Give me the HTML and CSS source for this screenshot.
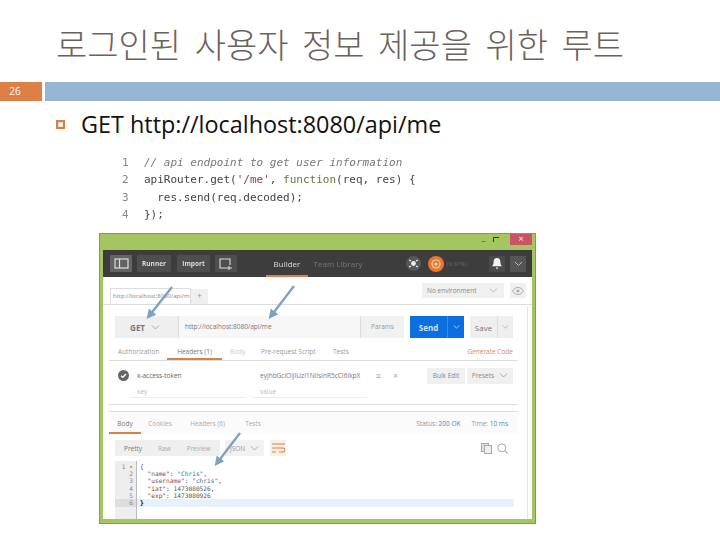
FILE: index.html
```html
<!DOCTYPE html>
<html lang="ko">
<head>
<meta charset="utf-8">
<title>로그인된 사용자 정보 제공을 위한 루트</title>
<link rel="stylesheet" href="styles.css">
</head>
<body>
<div class="slide">
  <h1 class="title">로그인된 사용자 정보 제공을 위한 루트</h1>
  <div class="band"><div class="num">26</div><div class="bar"></div></div>
  <div class="bullet"><span class="mark"></span><span class="bullet-text">GET http://localhost:8080/api/me</span></div>

  <div class="snippet">
    <div class="ln"><span class="no">1</span><span class="cm">// api endpoint to get user information</span></div>
    <div class="ln"><span class="no">2</span><span>apiRouter.get(<span class="str">'/me'</span>, <span class="kw">function</span>(req, res) {</span></div>
    <div class="ln"><span class="no">3</span><span>  res.send(req.decoded);</span></div>
    <div class="ln"><span class="no">4</span><span>});</span></div>
  </div>

  <div class="window">
    <div class="titlebar">
      <span class="wc">–</span><span class="wc max"></span><span class="close">×</span>
    </div>
    <div class="header">
      <span class="hbtn side"><svg width="15" height="11" viewBox="0 0 15 11"><rect x="1" y="1" width="13" height="9" fill="none" stroke="#ddd" stroke-width="1.2"/><path d="M5.5 1v9" stroke="#ddd" stroke-width="1.2"/></svg></span>
      <span class="hbtn">Runner</span>
      <span class="hbtn imp">Import</span>
      <span class="hbtn newb"><svg width="14" height="12" viewBox="0 0 14 12"><path d="M9 10H1V1h10v6M10 8v4M8 10h5" fill="none" stroke="#ddd" stroke-width="1.1"/></svg></span>
      <span class="htab active">Builder</span>
      <span class="htab">Team Library</span>
      <span class="sync"><svg width="15" height="15" viewBox="0 0 15 15"><circle cx="7.5" cy="7.5" r="7.5" fill="#585858"/><circle cx="7.5" cy="7.5" r="2.4" fill="#eee"/><path d="M3 4l2 1M12 4l-2 1M3 11l2-1M12 11l-2-1" stroke="#eee" stroke-width="1.2"/></svg></span>
      <span class="avatar"><svg width="16" height="16" viewBox="0 0 16 16"><circle cx="8" cy="8" r="8" fill="#e8772e"/><circle cx="8" cy="8" r="4" fill="none" stroke="#f6d2b8" stroke-width="1.2"/><circle cx="8" cy="8" r="1.6" fill="#f6d2b8"/></svg></span>
      <span class="user">IN SYNC</span>
      <span class="hsq bell"><svg width="10" height="12" viewBox="0 0 10 12"><path d="M5 0c2.600 0 3.400 2 3.400 4.200 0 2 .8 3.200 1.600 4H0c.8-.8 1.600-2 1.600-4C1.600 2 2.400 0 5 0zM3.800 9.500h2.400L5 11.500z" fill="#f2f2f2"/></svg></span>
      <span class="hsq chev"><svg width="9" height="6" viewBox="0 0 9 6"><path d="M1 1l3.500 3.500L8 1" fill="none" stroke="#bbb" stroke-width="1"/></svg></span>
    </div>
    <div class="app">
      <div class="tabrow">
        <span class="reqtab">http://localhost:8080/api/m</span>
        <span class="plus">+</span>
        <span class="env">No environment<svg class="v" width="9" height="5" viewBox="0 0 9 5"><path d="M1 .5l3.500 3.500L8 .5" fill="none" stroke="#bbb"/></svg></span>
        <span class="eye"><svg width="12" height="8" viewBox="0 0 12 8"><path d="M.5 4C2 1.500 4 .5 6 .5S10 1.500 11.500 4C10 6.500 8 7.500 6 7.500S2 6.500 .5 4z" fill="none" stroke="#aaa"/><circle cx="6" cy="4" r="1.600" fill="#aaa"/></svg></span>
      </div>
      <div class="urlrow">
        <span class="method">GET<svg class="v" width="9" height="5" viewBox="0 0 9 5"><path d="M1 .5l3.500 3.500L8 .5" fill="none" stroke="#aaa"/></svg></span>
        <span class="url">http://localhost:8080/api/me</span>
        <span class="params">Params</span>
        <span class="send"><b>Send</b><span class="send-v"><svg width="7" height="4" viewBox="0 0 9 5"><path d="M1 .5l3.500 3.500L8 .5" fill="none" stroke="#cfe3fa"/></svg></span></span>
        <span class="save"><span class="save-l">Save</span><span class="save-v"><svg width="7" height="4" viewBox="0 0 9 5"><path d="M1 .5l3.500 3.500L8 .5" fill="none" stroke="#aaa"/></svg></span></span>
      </div>
      <div class="reqtabs">
        <span class="rt t1">Authorization</span>
        <span class="rt on t2">Headers <i>(1)</i></span>
        <span class="rt dim t3">Body</span>
        <span class="rt t4">Pre-request Script</span>
        <span class="rt t5">Tests</span>
        <span class="gen">Generate Code</span>
      </div>
      <div class="hdrrow">
        <span class="check"><svg width="11" height="11" viewBox="0 0 11 11"><circle cx="5.500" cy="5.500" r="5.500" fill="#666"/><path d="M3 5.700l1.800 1.600L8 4" fill="none" stroke="#fff" stroke-width="1.300"/></svg></span>
        <span class="hk">x-access-token</span>
        <span class="hv">eyJhbGciOiJIUzI1NiIsInR5cCI6IkpX</span>
        <span class="hico">≡</span><span class="hico x">×</span>
        <span class="grey bulk">Bulk Edit</span>
        <span class="grey presets">Presets<svg class="v" width="9" height="5" viewBox="0 0 9 5"><path d="M1 .5l3.500 3.500L8 .5" fill="none" stroke="#aaa"/></svg></span>
      </div>
      <div class="keyrow"><span class="kk">key</span><span class="kv">value</span></div>
      <div class="resptabs">
        <span class="rp on">Body</span>
        <span class="rp c1">Cookies</span>
        <span class="rp c2">Headers <i>(6)</i></span>
        <span class="rp c3">Tests</span>
        <span class="status">Status: <i>200 OK</i></span>
        <span class="status time">Time: <i>10 ms</i></span>
      </div>
      <div class="viewrow">
        <span class="seg"><span class="sel">Pretty</span><span>Raw</span><span>Preview</span></span>
        <span class="json">JSON<svg class="v" width="9" height="5" viewBox="0 0 9 5"><path d="M1 .5l3.500 3.500L8 .5" fill="none" stroke="#aaa"/></svg></span>
        <span class="wrap"><svg width="13" height="11" viewBox="0 0 13 11"><path d="M0 1h13M0 5h11a2 2 0 0 1 0 4H7M0 9h4" fill="none" stroke="#dd8047" stroke-width="1.100"/></svg></span>
        <span class="tools"><svg width="11" height="11" viewBox="0 0 11 11"><rect x=".5" y=".5" width="7" height="8" fill="#ddd" stroke="#aaa"/><rect x="3.500" y="2.500" width="7" height="8" fill="#eee" stroke="#aaa"/></svg><svg width="11" height="11" viewBox="0 0 11 11"><circle cx="4.800" cy="4.800" r="4" fill="none" stroke="#aaa"/><path d="M7.700 7.700L10.500 10.500" stroke="#aaa" stroke-width="1.200"/></svg></span>
      </div>
      <div class="editor">
        <div class="gutter"><span>1 ▾</span><span>2</span><span>3</span><span>4</span><span>5</span><span class="cur">6</span></div>
        <div class="src">
          <span>{</span>
          <span>  <em>"name"</em>: <u>"Chris"</u>,</span>
          <span>  <em>"username"</em>: <u>"chris"</u>,</span>
          <span>  <em>"iat"</em>: <s>1473080526</s>,</span>
          <span>  <em>"exp"</em>: <s>1473080926</s></span>
          <span class="cur">}</span>
        </div>
      </div>
    </div>
  </div>

  <svg class="arrows" width="720" height="540" viewBox="0 0 720 540">
    <defs><marker id="head" markerWidth="4" markerHeight="4" refX="2.400" refY="2" orient="auto"><path d="M0 0L4 2L0 4z" fill="#7ea3c2"/></marker></defs>
    <path d="M172 287L149 316" stroke="#7ea3c2" stroke-width="2.400" marker-end="url(#head)"/>
    <path d="M294 286L271 316" stroke="#7ea3c2" stroke-width="2.400" marker-end="url(#head)"/>
    <path d="M240 433L217 463" stroke="#7ea3c2" stroke-width="2.400" marker-end="url(#head)"/>
  </svg>
</div>
</body>
</html>
```
FILE: styles.css
```css
* { box-sizing: border-box; }
html, body { margin: 0; padding: 0; background: #fff; }
.slide { position: relative; width: 720px; height: 540px; overflow: hidden; font-family: "Open Sans", "Noto Sans", sans-serif; }

.title { margin: 0; height: 82px; padding: 22px 0 0 56px; font: 300 34px/44px "Noto Sans CJK KR", sans-serif; color: #6c625c; word-spacing: 4px; white-space: nowrap; }

.band { display: flex; gap: 3px; height: 19px; }
.num { width: 42px; background: #dd8047; color: #fff; font-size: 10px; line-height: 19px; text-align: center; padding-right: 12px; }
.bar { flex: 1; background: #94b6d2; }

.bullet { display: flex; align-items: center; height: 46px; padding-left: 56px; }
.mark { width: 9px; height: 9px; border: 2px solid #dd8047; box-shadow: inset 0 0 0 1px #f3d9c8; margin-right: 16px; }
.bullet-text { font-size: 23.400px; color: #111; white-space: nowrap; }

.snippet { padding: 7px 0 0 122px; font: 11px/17.300px "DejaVu Sans Mono", monospace; color: #444; filter: blur(.3px); }
.ln { display: flex; white-space: pre; }
.no { width: 22px; color: #888; }
.cm { color: #777; font-style: italic; }
.str { color: #a33; }
.kw { color: #5a7a3a; }

.window { position: absolute; left: 99px; top: 233px; width: 437px; height: 291px; background: #a5c561; border: 1px solid #7f9e45; padding: 0 3px 4px; display: flex; flex-direction: column; font-size: 6.500px; color: #999; filter: blur(.4px); }

.titlebar { height: 16px; display: flex; justify-content: flex-end; align-items: flex-start; flex: none; }
.wc { width: 13px; height: 11px; color: #333; font-size: 8px; line-height: 12px; text-align: center; }
.wc.max { position: relative; margin-right: 7px; }
.wc.max::before { content: ""; position: absolute; left: 3px; top: 3px; width: 5px; height: 4px; border: 1px solid #333; border-width: 1px 0 0 1px; }
.close { width: 22px; height: 11px; background: #c95463; color: #fff; font-size: 9px; line-height: 10px; text-align: center; }

.header { height: 27px; flex: none; background: #3d3d3d; display: flex; align-items: center; padding-left: 7px; color: #ddd; font-weight: 700; }
.hbtn { height: 17px; background: #4e4e4e; display: flex; align-items: center; justify-content: center; width: 34px; margin-right: 6px; border-radius: 1px; }
.hbtn.side { width: 22px; background: #646464; margin-right: 5px; }
.hbtn.imp { width: 33px; margin-right: 5px; }
.hbtn.newb { width: 22px; }
.htab { height: 27px; display: flex; align-items: center; justify-content: center; font-size: 8px; font-weight: 400; color: #777; width: 56px; }
.htab.active { width: 42px; margin-left: 23px; margin-right: 2px; color: #ddd; border-bottom: 2px solid #dd8047; padding-top: 2px; }
.sync { margin-left: 40px; display: flex; }
.avatar { margin-left: 7px; display: flex; }
.user { color: #666; font-size: 5.500px; font-weight: 400; width: 45px; padding-left: 3px; }
.hsq { width: 16px; height: 16px; background: #555; display: flex; align-items: center; justify-content: center; }
.bell { margin-right: 5px; background: #4a4a4a; }

.app { flex: 1; background: #fff; display: flex; flex-direction: column; min-height: 0; position: relative; }
.app::after { content: ""; position: absolute; right: 4px; top: 30px; bottom: 0; width: 1px; background: #e4e4e4; }

.tabrow { height: 28px; flex: none; display: flex; align-items: flex-end; padding-left: 7px; border-bottom: 1px solid #ddd; }
.reqtab { width: 81px; height: 16px; border: 1px solid #ddd; border-bottom: 0; background: #fff; font-size: 6px; line-height: 15px; padding-left: 2px; color: #888; white-space: nowrap; }
.plus { width: 17px; height: 15px; background: #f0f0f0; text-align: center; line-height: 14px; font-size: 9px; }
.env { margin-left: 214px; margin-bottom: 6px; width: 82px; height: 15px; background: #f0f0f0; display: flex; align-items: center; justify-content: space-between; padding: 0 6px 0 5px; color: #888; }
.eye { margin-left: 6px; margin-bottom: 6px; width: 16px; height: 15px; background: #f0f0f0; display: flex; align-items: center; justify-content: center; }

.urlrow { height: 22px; margin-top: 11px; flex: none; display: flex; padding-left: 12px; }
.method { width: 63px; background: #efefef; font-weight: 700; color: #777; font-size: 8px; display: flex; align-items: center; justify-content: flex-end; gap: 6px; padding-right: 18px; }
.url { width: 182px; background: #f7f7f7; border-left: 1px solid #ddd; line-height: 22px; padding-left: 6px; color: #777; }
.params { width: 44px; background: #f1f1f1; border-left: 1px solid #ddd; text-align: center; line-height: 22px; }
.send { width: 54px; margin-left: 6px; background: #0b6fe0; color: #cfe3fa; font-size: 8px; display: flex; align-items: center; }
.send b { flex: 1; text-align: center; }
.send-v { width: 17px; height: 22px; border-left: 1px solid #3c8ce6; display: flex; align-items: center; justify-content: center; }
.save { width: 43px; margin-left: 6px; background: #efefef; display: flex; align-items: center; color: #777; font-size: 8px; }
.save-l { flex: 1; text-align: center; }
.save-v { width: 16px; height: 22px; border-left: 1px solid #ddd; display: flex; align-items: center; justify-content: center; }

.reqtabs { height: 23px; flex: none; display: flex; align-items: center; border-bottom: 1px solid #ddd; margin: 0 14px 0 6px; }
.rt { white-space: nowrap; padding-top: 5px; }
.rt i { font-style: normal; color: #4a8ac0; }
.t1 { margin-left: 9px; width: 49px; }
.t2 { width: 55px; height: 22px; line-height: 18px; text-align: center; color: #777; border-bottom: 2px solid #dd8047; }
.t3 { margin-left: 8px; width: 31px; color: #ccc; }
.t4 { width: 72px; }
.gen { margin-left: auto; color: #d78a5b; padding-top: 5px; margin-right: 5px; }

.hdrrow { height: 23px; margin-top: 3px; flex: none; display: flex; align-items: center; padding-left: 15px; }
.check { display: flex; margin-right: 8px; }
.hk { width: 123px; color: #666; }
.hv { width: 110px; color: #777; white-space: nowrap; }
.hico { width: 17px; text-align: center; color: #aaa; font-size: 9px; }
.hico.x { margin-right: 23px; }
.grey { height: 16px; background: #f0f0f0; display: flex; align-items: center; justify-content: center; color: #888; }
.bulk { width: 38px; margin-right: 2px; }
.presets { width: 46px; gap: 5px; }

.keyrow { height: 18px; flex: none; display: flex; border-bottom: 1px solid #ddd; margin: 0 14px 0 6px; color: #bbb; }
.kk { margin-left: 21px; width: 116px; height: 11px; border-bottom: 1px solid #eee; line-height: 10px; padding-left: 7px; }
.kv { margin-left: 6px; width: 115px; height: 11px; border-bottom: 1px solid #eee; line-height: 10px; padding-left: 8px; }

.resptabs { height: 23px; margin: 6px 14px 0 6px; flex: none; display: flex; align-items: center; border-top: 1px solid #ddd; background: #fbfbfb; }
.rp { text-align: center; color: #aaa; }
.rp i { font-style: normal; }
.rp.on { width: 32px; height: 22px; line-height: 24px; color: #777; border-bottom: 2px solid #dd8047; }
.c1 { width: 38px; }
.c2 { width: 57px; }
.c3 { width: 34px; }
.status { margin-left: auto; color: #999; white-space: nowrap; }
.status i { font-style: normal; color: #4a8ac0; }
.time { margin-left: 11px; margin-right: 10px; }

.viewrow { height: 16px; margin-top: 6px; flex: none; display: flex; padding-left: 12px; align-items: center; }
.seg { width: 105px; height: 16px; background: #efefef; display: flex; align-items: center; gap: 16px; padding-left: 9px; color: #aaa; }
.seg .sel { color: #777; }
.json { width: 39px; height: 16px; margin-left: 5px; background: #f2f2f2; display: flex; align-items: center; gap: 5px; padding-left: 5px; }
.wrap { width: 16px; height: 16px; margin-left: 6px; background: #fbeee5; display: flex; align-items: center; justify-content: center; }
.tools { margin-left: auto; margin-right: 24px; display: flex; gap: 5px; }

.editor { flex: 1; min-height: 0; margin: 5px 18px 0 12px; display: flex; font: 6.200px/7.200px "DejaVu Sans Mono", monospace; white-space: pre; }
.gutter { width: 22px; background: #eee; border-right: 1px solid #bbb; padding-top: 2px; display: flex; flex-direction: column; text-align: right; color: #888; }
.gutter span { padding-right: 3px; height: 7.200px; flex: none; }
.gutter .cur { background: #ddd; height: 8px; line-height: 8px; }
.src { flex: 1; padding-top: 2px; display: flex; flex-direction: column; color: #444; }
.src span { padding-left: 3px; height: 7.200px; flex: none; }
.src .cur { background: #e6f1fb; height: 8px; line-height: 8px; color: #000; font-weight: 700; }
.src em { font-style: normal; color: #944; }
.src u { text-decoration: none; color: #4a6a9a; }
.src s { text-decoration: none; color: #555; }

.arrows { position: absolute; left: 0; top: 0; pointer-events: none; }
```
